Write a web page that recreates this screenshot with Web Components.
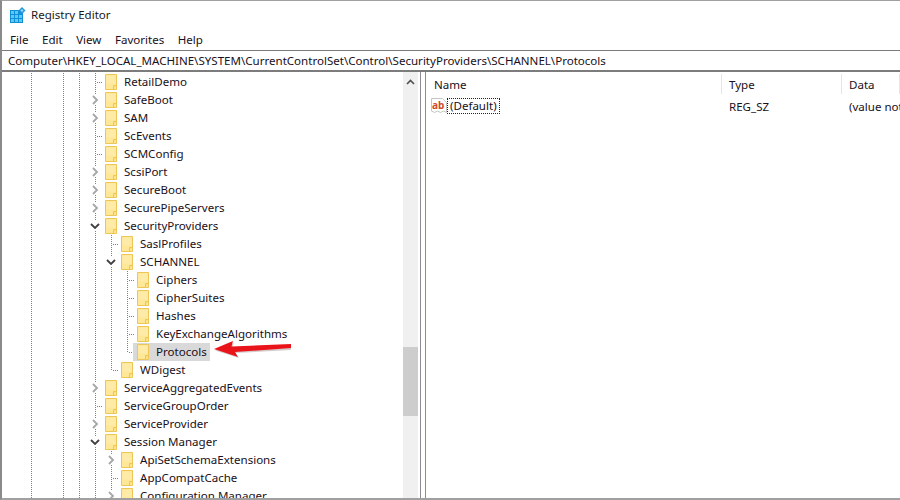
<!DOCTYPE html>
<html><head><meta charset="utf-8"><style>
html,body{margin:0;padding:0;background:#fff}
body{width:900px;height:500px;overflow:hidden;font:11.56px "Noto Sans","Open Sans",sans-serif;color:#1a1020}
</style></head><body>
<reg-window>
<reg-title>Registry Editor</reg-title>
<reg-menu><span>File</span><span>Edit</span><span>View</span><span>Favorites</span><span>Help</span></reg-menu>
<reg-address>Computer\HKEY_LOCAL_MACHINE\SYSTEM\CurrentControlSet\Control\SecurityProviders\SCHANNEL\Protocols</reg-address>
<reg-panes>
<reg-tree id="tree"></reg-tree>
<reg-values></reg-values>
</reg-panes>
</reg-window>
<script>
const FOLDER=`<svg width="12" height="16" viewBox="0 0 12 16" style="display:block"><path d="M.5.5h11v15H.5z" fill="#ffe798" stroke="#edc655"/><path d="M1.500 1.500h9v8h-9z" fill="#ffeba8"/><path d="M8.500 15.500v-4h3" fill="#ffdf85" stroke="#edc655"/></svg>`;
function def(name,html){customElements.define(name,class extends HTMLElement{constructor(){super();this.attachShadow({mode:'open'}).innerHTML=html;}});}
def('reg-window',`<style>:host{display:flex;flex-direction:column;width:900px;height:500px;box-sizing:border-box;border-top:1px solid #a0a0a0;border-left:2px solid #8a8a8a;border-bottom:2px solid #a0a0a0;background:#fff;overflow:hidden}</style><slot></slot>`);
def('reg-title',`<style>:host{display:flex;align-items:center;gap:5px;height:27px;padding:0 0 2px 8px;flex:none}span{color:#1a1a1a}svg{display:block}</style>
<svg width="16" height="16" viewBox="0 0 16 16"><path fill="#0f8fd8" d="M0 3h13v13H0z"/><path fill="#5cc8f5" d="M1 4h3v3H1zM5 4h3v3H5zM1 8h3v3H1zM5 8h3v3H5zM9 8h3v3H9zM1 12h3v3H1zM5 12h3v3H5zM9 12h3v3H9z"/><path fill="#2497d9" d="M12 0l3.500 3.500L12 7 8.500 3.500z"/><path fill="#9fdcf7" d="M12 2l1.500 1.500L12 5l-1.500-1.500z"/></svg><span><slot></slot></span>`);
def('reg-menu',`<style>:host{display:flex;gap:13.500px;height:18px;align-items:center;padding:0 0 2px 8px;flex:none}</style><slot></slot>`);
def('reg-address',`<style>:host{display:flex;align-items:center;height:19px;padding-left:6px;border-top:1px solid #7c7c7c;border-bottom:2px solid #7c7c7c;flex:none;white-space:nowrap}</style><slot></slot>`);
def('reg-panes',`<style>:host{display:flex;flex:1;min-height:0}</style><slot></slot>`);
def('reg-row',`<style>:host{display:flex;align-items:center;height:18px;flex:none;white-space:nowrap}
.ch{flex:none;width:10px;height:10px;display:flex;margin-left:-5px;margin-right:5px}
.f{display:block;flex:none}
.t{padding:0 3px;margin-left:4px;height:18px;line-height:18px}
.w{display:flex;align-items:center;height:18px}
:host([sel]) .w{background:#d9d9d9;margin-left:-4px;padding-left:4px}
</style><span class="ch"></span><span class="w"><span class="f">${FOLDER}</span><span class="t"><slot></slot></span></span>`);
customElements.define('reg-tree',class extends HTMLElement{constructor(){super();
 this.attachShadow({mode:'open'}).innerHTML=`<style>:host{display:flex;width:417px;flex:none;overflow:hidden;min-height:0}
 .list{flex:1;display:flex;flex-direction:column;overflow:hidden;padding-top:1px;min-width:0}
 .sb{flex:none;width:15px;background:#f0f0f0;display:flex;flex-direction:column;align-items:center}
 .sb svg{flex:none;margin-top:7px;display:block}.thumb{flex:none;width:15px;height:69px;margin-top:262px;background:#cdcdcd}
 .gap{flex:none;width:1px}
 </style><div class="list"><slot></slot></div><div class="sb"><svg width="9" height="6" viewBox="0 0 9 6"><path d="M1 5l3.500-3.500L8 5" fill="none" stroke="#505050" stroke-width="1.600"/></svg><div class="thumb"></div></div><div class="gap"></div>`;
 const R=[[0,'RetailDemo','l'],[0,'SafeBoot','c'],[0,'SAM','c'],[0,'ScEvents','l'],[0,'SCMConfig','l'],[0,'ScsiPort','c'],[0,'SecureBoot','c'],[0,'SecurePipeServers','c'],[0,'SecurityProviders','o'],
 [1,'SaslProfiles','l'],[1,'SCHANNEL','o'],[2,'Ciphers','l'],[2,'CipherSuites','l'],[2,'Hashes','l'],[2,'KeyExchangeAlgorithms','l'],[2,'Protocols','l',1],[1,'WDigest','l'],
 [0,'ServiceAggregatedEvents','c'],[0,'ServiceGroupOrder','l'],[0,'ServiceProvider','c'],[0,'Session Manager','o'],[1,'ApiSetSchemaExtensions','c'],[1,'AppCompatCache','l'],[1,'Configuration Manager','c']];
 const dv=x=>`repeating-linear-gradient(to bottom,#808080 0 1px,transparent 1px 2px) ${x}px 0/1px 100% no-repeat`;
 const dh=(x,w)=>`repeating-linear-gradient(to right,#808080 0 1px,transparent 1px 2px) ${x}px 9px/${w}px 1px no-repeat`;
 const half=x=>`repeating-linear-gradient(to bottom,#808080 0 1px,transparent 1px 2px) ${x}px 0/1px 10px no-repeat`;
 R.forEach(([lv,n,st,sel])=>{
  const r=document.createElement('reg-row');r.textContent=n;
  const cx=93+lv*16;
  r.style.paddingLeft=cx+'px';
  const bg=[dv(29),dv(61),dv(77),dv(93)];
  if(lv>=1) bg.push(n==='WDigest'?half(109):dv(109));
  if(lv==2) bg.push(n==='Protocols'?half(125):dv(125));
  if(st==='l') bg.push(dh(cx+2,6));
  r.style.background=bg.join(',');
  if(sel)r.setAttribute('sel','');
  const c=r.shadowRoot.querySelector('.ch');
  if(st==='c')c.innerHTML='<svg width="10" height="10" viewBox="0 0 10 10" style="background:#fff;display:block"><path d="M3 1l4 4-4 4" fill="none" stroke="#a6a6a6" stroke-width="1.800"/></svg>';
  if(st==='o')c.innerHTML='<svg width="10" height="10" viewBox="0 0 10 10" style="background:#fff;display:block"><path d="M1 3l4 4 4-4" fill="none" stroke="#404040" stroke-width="1.800"/></svg>';
  this.appendChild(r);
 });
}});
def('reg-values',`<style>:host{display:flex;flex-direction:column;flex:1;min-width:0;border-left:1px solid #8c8c94;margin-left:1px}
 .in{flex:1;margin-left:4px;border-left:1px solid #8c8c94;display:flex;flex-direction:column;padding-left:1px}
 .head{display:grid;grid-template-columns:295px 120px 1fr;height:24px;align-items:center}
 .head span{padding-left:7px;height:20px;line-height:22px;border-right:1px solid #e5e5e5;box-sizing:border-box}
 .row{display:grid;grid-template-columns:295px 120px 1fr;height:20px;align-items:center;white-space:nowrap;overflow:hidden}
 .n{display:flex;align-items:center;padding-left:4px}
 .lab{outline:1px dotted #222;outline-offset:-1px;padding:0 3px;height:16px;line-height:16px}
 .row>span:not(.n){padding-left:7px}
 svg{flex:none;display:block}
 </style><div class="in"><div class="head"><span>Name</span><span>Type</span><span>Data</span></div>
 <div class="row"><span class="n"><svg width="16" height="16" viewBox="0 0 16 16"><path d="M.5 .5h11l4 4v10l-3-1.500-3 1.500-3-1.500-3 1.500-3-1.500z" fill="#fff" stroke="#c4c4c4"/><text x="1" y="10.500" font-family="Noto Sans" font-weight="700" font-size="10" fill="#d2492a">ab</text></svg><span class="lab">(Default)</span></span><span>REG_SZ</span><span>(value not set)</span></div></div>`);
customElements.define('reg-arrow',class extends HTMLElement{constructor(){super();this.attachShadow({mode:'open'}).innerHTML=`<style>:host{display:block;position:absolute;left:214px;top:340px;width:80px;height:20px}svg{display:block}</style><svg width="80" height="20" viewBox="0 0 80 20"><path d="M1 10.500L20 3 18 8.500 77 6l0 4-56 3 4 5z" fill="#b9a9a9" opacity=".6"/><path d="M0 9L19 1l-1.500 5.500L77 4v4L21 12l3 5z" fill="#e9141a"/></svg>`;}});
const a=document.createElement('reg-arrow');document.querySelector('reg-window').appendChild(a);
</script>
</body></html>
